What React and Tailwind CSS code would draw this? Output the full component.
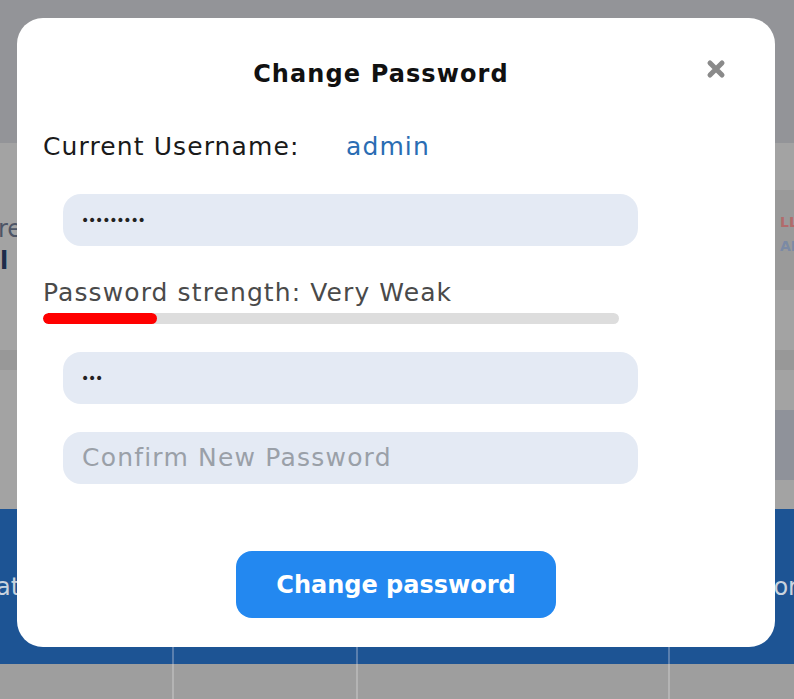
import React from "react";

const font = { fontFamily: '"DejaVu Sans", "Noto Sans", sans-serif' };

function Divs({ color }) {
  return (
    <>
      <div className={`absolute top-0 bottom-0 left-[172px] w-[2px] ${color}`} />
      <div className={`absolute top-0 bottom-0 left-[356px] w-[2px] ${color}`} />
      <div className={`absolute top-0 bottom-0 left-[668px] w-[2px] ${color}`} />
    </>
  );
}

export default function App() {
  return (
    <div className="relative w-[794px] h-[699px] overflow-hidden" style={font}>
      {/* background page under overlay */}
      <div className="flex flex-col w-full h-full">
        <div className="h-[143px] bg-[#939498]" />
        <div className="h-[207px] bg-[#a3a3a3] flex justify-between">
          <div className="flex flex-col pt-[70px] text-[24px] leading-[32px]">
            <span className="text-[#4d5566] -ml-[2px]">re</span>
            <span className="text-[#1d2c4a] font-bold">l ·</span>
          </div>
          <div className="mt-[47px] h-[100px] w-[40px] bg-[#9a9a9a] flex flex-col pt-[20px] pl-[26px] text-[14px] leading-[24px] font-bold">
            <span className="text-[#b26b6b]">LL</span>
            <span className="text-[#7b8aa5]">AR</span>
          </div>
        </div>
        <div className="h-[20px] bg-[#989898]" />
        <div className="h-[139px] bg-[#a3a3a3] flex justify-end">
          <div className="mt-[40px] h-[70px] w-[40px] bg-[#8f929a]" />
        </div>
        <div className="relative h-[155px] bg-[#1d5494] flex items-center justify-between text-[24px] text-[#c9d3de]">
          <Divs color="bg-[#5a7fae]" />
          <span className="-ml-[4px]">at</span>
          <span className="-mr-[4px]">or</span>
        </div>
        <div className="relative flex-1 bg-[#9e9e9e]">
          <Divs color="bg-[#b4b4b4]" />
        </div>
      </div>

      {/* modal */}
      <div className="absolute left-[17px] top-[18px] w-[758px] h-[629px] rounded-[26px] bg-white flex flex-col">
        <div className="relative mt-[40px] pl-[26px] pr-[56px] text-center text-[24px] leading-[32px] font-bold tracking-[1.1px] text-[#111]">
          Change Password
          <svg
            className="absolute right-[48px] top-[0px]"
            width="22"
            height="22"
            viewBox="0 0 22 22"
          >
            <path d="M5 5 L17 17 M17 5 L5 17" stroke="#8a8a8a" strokeWidth="5" strokeLinecap="round" />
          </svg>
        </div>
        <div className="mt-[41px] pl-[26px] flex text-[25px] leading-[32px] tracking-[1.1px]">
          <span className="text-[#1a1a1a] w-[303px]">Current Username:</span>
          <span className="text-[#2a6db3]">admin</span>
        </div>
        <div className="mt-[31px] ml-[46px] w-[575px] h-[52px] rounded-[18px] bg-[#e4eaf4] flex items-center pl-[18px] text-[14px] text-[#222] tracking-[-1.2px]">
          •••••••••
        </div>
        <div className="mt-[31px] pl-[26px] text-[25px] leading-[32px] tracking-[1.1px] text-[#4a4a4a]">
          Password strength: Very Weak
        </div>
        <div className="mt-[4px] ml-[26px] w-[576px] h-[11px] rounded-full bg-[#dddddd] flex overflow-hidden">
          <div className="w-[114px] h-full bg-[#ff0000] rounded-full" />
        </div>
        <div className="mt-[28px] ml-[46px] w-[575px] h-[52px] rounded-[18px] bg-[#e4eaf4] flex items-center pl-[18px] text-[14px] text-[#222] tracking-[-1.2px]">
          •••
        </div>
        <div className="mt-[28px] ml-[46px] w-[575px] h-[52px] rounded-[18px] bg-[#e4eaf4] flex items-center pl-[19px] text-[25px] tracking-[1.2px] text-[#9aa0a8]">
          Confirm New Password
        </div>
        <div className="mt-[67px] flex justify-center">
          <button className="w-[320px] h-[67px] rounded-[16px] bg-[#2388f0] text-white text-[24px] font-semibold">
            Change password
          </button>
        </div>
      </div>
    </div>
  );
}
